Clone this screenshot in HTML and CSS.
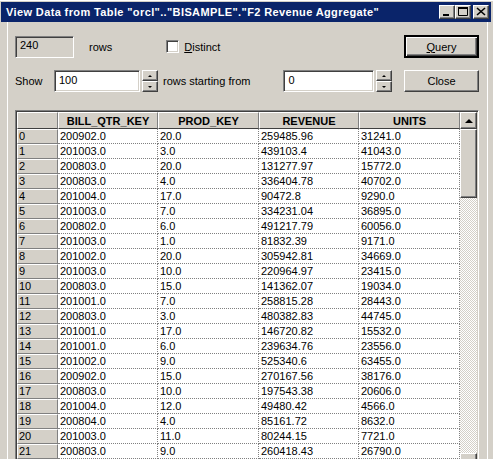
FILE: index.html
```html
<!DOCTYPE html>
<html lang="en">
<head>
    <meta charset="UTF-8">
    <meta name="viewport" content="width=device-width, initial-scale=1.0">
    <title>View Data</title>
    <link rel="stylesheet" href="styles.css">
</head>
<body>
    <div class="window">
        <div class="titlebar">
            <span class="title">View Data from Table "orcl".."BISAMPLE"."F2 Revenue Aggregate"</span>
            <div class="caption-btns">
                <span class="cap-btn">
                    <svg width="14" height="12" viewBox="0 0 14 12"><rect x="3" y="8" width="6" height="2" fill="#000"/></svg>
                </span>
                <span class="cap-btn">
                    <svg width="14" height="12" viewBox="0 0 14 12"><path d="M2.5 1.5h9v8h-9z" fill="none" stroke="#000"/><rect x="2" y="1" width="10" height="2" fill="#000"/></svg>
                </span>
                <span class="cap-btn cap-close">
                    <svg width="14" height="12" viewBox="0 0 14 12"><path d="M3 2l8 7M11 2l-8 7" stroke="#000" stroke-width="1.6"/></svg>
                </span>
            </div>
        </div>

        <div class="content">
            <div class="ctl-row">
                <div class="field field-off count-field">240</div>
                <span class="lbl rows-lbl">rows</span>
                <label class="check">
                    <span class="checkbox"></span>
                    <span><u>D</u>istinct</span>
                </label>
                <button class="btn btn-default"><u>Q</u>uery</button>
            </div>

            <div class="ctl-row row-show">
                <span class="lbl show-lbl">Show</span>
                <div class="field show-field">100</div>
                <div class="spinner">
                    <span class="spin"><i class="arr-up"></i></span>
                    <span class="spin"><i class="arr-down"></i></span>
                </div>
                <span class="lbl from-lbl">rows starting from</span>
                <div class="field start-field">0</div>
                <div class="spinner">
                    <span class="spin"><i class="arr-up"></i></span>
                    <span class="spin"><i class="arr-down"></i></span>
                </div>
                <button class="btn">Close</button>
            </div>

            <div class="grid-pane">
                <table class="grid">
                    <colgroup>
                        <col class="c-num">
                        <col class="c-100">
                        <col class="c-101">
                        <col class="c-100">
                        <col class="c-101">
                    </colgroup>
                    <thead>
                        <tr><th></th><th>BILL_QTR_KEY</th><th>PROD_KEY</th><th>REVENUE</th><th>UNITS</th></tr>
                    </thead>
                    <tbody>
                        <tr><td class="num">0</td><td>200902.0</td><td>20.0</td><td>259485.96</td><td>31241.0</td></tr>
                        <tr><td class="num">1</td><td>201003.0</td><td>3.0</td><td>439103.4</td><td>41043.0</td></tr>
                        <tr><td class="num">2</td><td>200803.0</td><td>20.0</td><td>131277.97</td><td>15772.0</td></tr>
                        <tr><td class="num">3</td><td>200803.0</td><td>4.0</td><td>336404.78</td><td>40702.0</td></tr>
                        <tr><td class="num">4</td><td>201004.0</td><td>17.0</td><td>90472.8</td><td>9290.0</td></tr>
                        <tr><td class="num">5</td><td>201003.0</td><td>7.0</td><td>334231.04</td><td>36895.0</td></tr>
                        <tr><td class="num">6</td><td>200802.0</td><td>6.0</td><td>491217.79</td><td>60056.0</td></tr>
                        <tr><td class="num">7</td><td>201003.0</td><td>1.0</td><td>81832.39</td><td>9171.0</td></tr>
                        <tr><td class="num">8</td><td>201002.0</td><td>20.0</td><td>305942.81</td><td>34669.0</td></tr>
                        <tr><td class="num">9</td><td>201003.0</td><td>10.0</td><td>220964.97</td><td>23415.0</td></tr>
                        <tr><td class="num">10</td><td>200803.0</td><td>15.0</td><td>141362.07</td><td>19034.0</td></tr>
                        <tr><td class="num">11</td><td>201001.0</td><td>7.0</td><td>258815.28</td><td>28443.0</td></tr>
                        <tr><td class="num">12</td><td>200803.0</td><td>3.0</td><td>480382.83</td><td>44745.0</td></tr>
                        <tr><td class="num">13</td><td>201001.0</td><td>17.0</td><td>146720.82</td><td>15532.0</td></tr>
                        <tr><td class="num">14</td><td>201001.0</td><td>6.0</td><td>239634.76</td><td>23556.0</td></tr>
                        <tr><td class="num">15</td><td>201002.0</td><td>9.0</td><td>525340.6</td><td>63455.0</td></tr>
                        <tr><td class="num">16</td><td>200902.0</td><td>15.0</td><td>270167.56</td><td>38176.0</td></tr>
                        <tr><td class="num">17</td><td>200803.0</td><td>10.0</td><td>197543.38</td><td>20606.0</td></tr>
                        <tr><td class="num">18</td><td>201004.0</td><td>12.0</td><td>49480.42</td><td>4566.0</td></tr>
                        <tr><td class="num">19</td><td>200804.0</td><td>4.0</td><td>85161.72</td><td>8632.0</td></tr>
                        <tr><td class="num">20</td><td>201003.0</td><td>11.0</td><td>80244.15</td><td>7721.0</td></tr>
                        <tr><td class="num">21</td><td>200803.0</td><td>9.0</td><td>260418.43</td><td>26790.0</td></tr>
                    </tbody>
                </table>
                <div class="vscroll">
                    <span class="sb-btn"><i class="sb-up"></i></span>
                    <span class="sb-thumb"></span>
                    <span class="sb-track"></span>
                    <span class="sb-btn"><i class="sb-down"></i></span>
                </div>
            </div>
        </div>
    </div>
</body>
</html>
```

FILE: styles.css
```css
:root {
    --face: #d4d0c8;
    --shadow: #808080;
    --dark: #404040;
    --title: #0a246a;
}
body{
    margin: 0;
    background: var(--face);
    font: 11px "Liberation Sans", Arial, sans-serif;
    color: #000;
}
.window{
    height: 459px;
    overflow: hidden;
    background: var(--face);
    border-top: 1px solid #fff;
    box-sizing: border-box;
}
/* title bar */
.titlebar{
    display: flex;
    align-items: center;
    justify-content: space-between;
    height: 20px;
    margin: 1px 2px 0 1px;
    padding: 0 2px 0 5px;
    background: var(--title);
    color: #fff;
}
.title{
    font-weight: bold;
    font-size: 11px;
    letter-spacing: 0.38px;
    white-space: nowrap;
}
.caption-btns{
    display: flex;
    gap: 0;
}
.cap-btn{
    display: block;
    width: 16px;
    height: 14px;
    box-sizing: border-box;
    background: var(--face);
    border: 1px solid;
    border-color: #fff var(--dark) var(--dark) #fff;
    box-shadow: inset -1px -1px var(--shadow);
}
.cap-btn svg{
    display: block;
}
.cap-close{
    margin-left: 2px;
}
/* dialog body */
.content{
    margin: 0 5px 0 7px;
    padding: 13px 8px 0 7px;
    border-left: 1px solid #fff;
    border-right: 1px solid #fff;
    height: 100%;
}
.ctl-row{
    display: flex;
    align-items: center;
    height: 23px;
}
.row-show{
    margin-top: 12px;
    height: 22px;
}
.lbl{
    white-space: nowrap;
}
.field{
    box-sizing: border-box;
    height: 22px;
    padding: 0 4px;
    line-height: 18px;
    background: #fff;
    border: 1px solid;
    border-color: var(--shadow) #fff #fff var(--shadow);
    box-shadow: inset 1px 1px var(--dark), inset -1px -1px var(--face);
}
.field-off{
    background: var(--face);
    line-height: 17px;
}
.count-field{
    width: 59px;
}
.rows-lbl{
    margin-left: 15px;
}
.check{
    display: flex;
    align-items: center;
    gap: 5px;
    margin-left: 54px;
}
.checkbox{
    width: 13px;
    height: 13px;
    box-sizing: border-box;
    background: #fff;
    border: 1px solid;
    border-color: var(--shadow) #fff #fff var(--shadow);
    box-shadow: inset 1px 1px var(--dark), inset -1px -1px var(--face);
}
.btn{
    width: 75px;
    height: 23px;
    margin-left: auto;
    padding: 0;
    font: inherit;
    color: #000;
    background: var(--face);
    border: 1px solid;
    border-color: #fff var(--dark) var(--dark) #fff;
    box-shadow: inset -1px -1px var(--shadow);
}
.btn-default{
    outline: 1px solid #000;
    outline-offset: -1px;
    border-width: 2px 2px 2px 2px;
    border-color: #000;
    box-shadow: inset 1px 1px #fff, inset -1px -1px var(--dark), inset -2px -2px var(--shadow);
}
.row-show .btn{
    height: 22px;
}
.show-lbl{
    width: 39px;
}
.show-field{
    width: 86px;
}
.start-field{
    width: 91px;
    margin-left: 33px;
}
.spinner{
    display: flex;
    flex-direction: column;
    gap: 0;
    margin: 0 5px 0 2px;
}
.spin{
    display: flex;
    align-items: center;
    justify-content: center;
    width: 16px;
    height: 11px;
    box-sizing: border-box;
    background: var(--face);
    border: 1px solid;
    border-color: #fff var(--dark) var(--dark) #fff;
    box-shadow: inset -1px -1px var(--shadow);
}
.arr-up, .arr-down{
    width: 0;
    height: 0;
    border-left: 2px solid transparent;
    border-right: 2px solid transparent;
}
.arr-up{
    border-bottom: 2px solid #000;
}
.arr-down{
    border-top: 2px solid #000;
}
/* result grid */
.grid-pane{
    display: flex;
    align-items: flex-start;
    margin-top: 18px;
    height: 362px;
    overflow: hidden;
    border: 1px solid;
    border-color: var(--shadow) #fff #fff var(--shadow);
    box-shadow: inset 1px 1px var(--dark), inset -1px -1px var(--face);
    padding: 1px;
    box-sizing: border-box;
    background: var(--face);
}
.grid{
    border-collapse: separate;
    border-spacing: 0;
    table-layout: fixed;
    width: 443px;
    background: #fff;
}
.c-num{ width: 41px; }
.c-100{ width: 100px; }
.c-101{ width: 101px; }
.grid th{
    height: 17px;
    padding: 0;
    box-sizing: border-box;
    background: var(--face);
    border-top: 1px solid #fff;
    border-left: 1px solid #fff;
    border-right: 1px solid var(--shadow);
    border-bottom: 1px solid var(--dark);
    font-weight: bold;
    text-align: center;
    line-height: 14px;
}
.grid tbody tr{
    height: 15px;
}
.grid td{
    padding: 0 0 0 2px;
    border-right: 1px dotted var(--shadow);
    border-bottom: 1px dotted var(--shadow);
    line-height: 14px;
    white-space: nowrap;
    overflow: hidden;
}
.grid td.num{
    padding-left: 1px;
    background: var(--face);
    border-top: 1px solid #fff;
    border-left: 1px solid #fff;
    border-right: 1px solid var(--shadow);
    border-bottom: 1px solid var(--shadow);
    line-height: 13px;
}
.vscroll{
    display: flex;
    flex-direction: column;
    width: 17px;
    height: 358px;
}
.sb-btn, .sb-thumb{
    display: flex;
    align-items: center;
    justify-content: center;
    flex: none;
    box-sizing: border-box;
    background: var(--face);
    border: 1px solid;
    border-color: #fff var(--dark) var(--dark) #fff;
    box-shadow: inset -1px -1px var(--shadow);
}
.sb-btn{
    height: 17px;
}
.sb-thumb{
    height: 69px;
}
.sb-track{
    flex: 1;
    background: repeating-conic-gradient(#fff 0 25%, var(--face) 0 50%) 0 0 / 2px 2px;
}
.sb-up, .sb-down{
    width: 0;
    height: 0;
    border-left: 4px solid transparent;
    border-right: 4px solid transparent;
}
.sb-up{
    border-bottom: 4px solid #000;
}
.sb-down{
    border-top: 4px solid #000;
}
```
